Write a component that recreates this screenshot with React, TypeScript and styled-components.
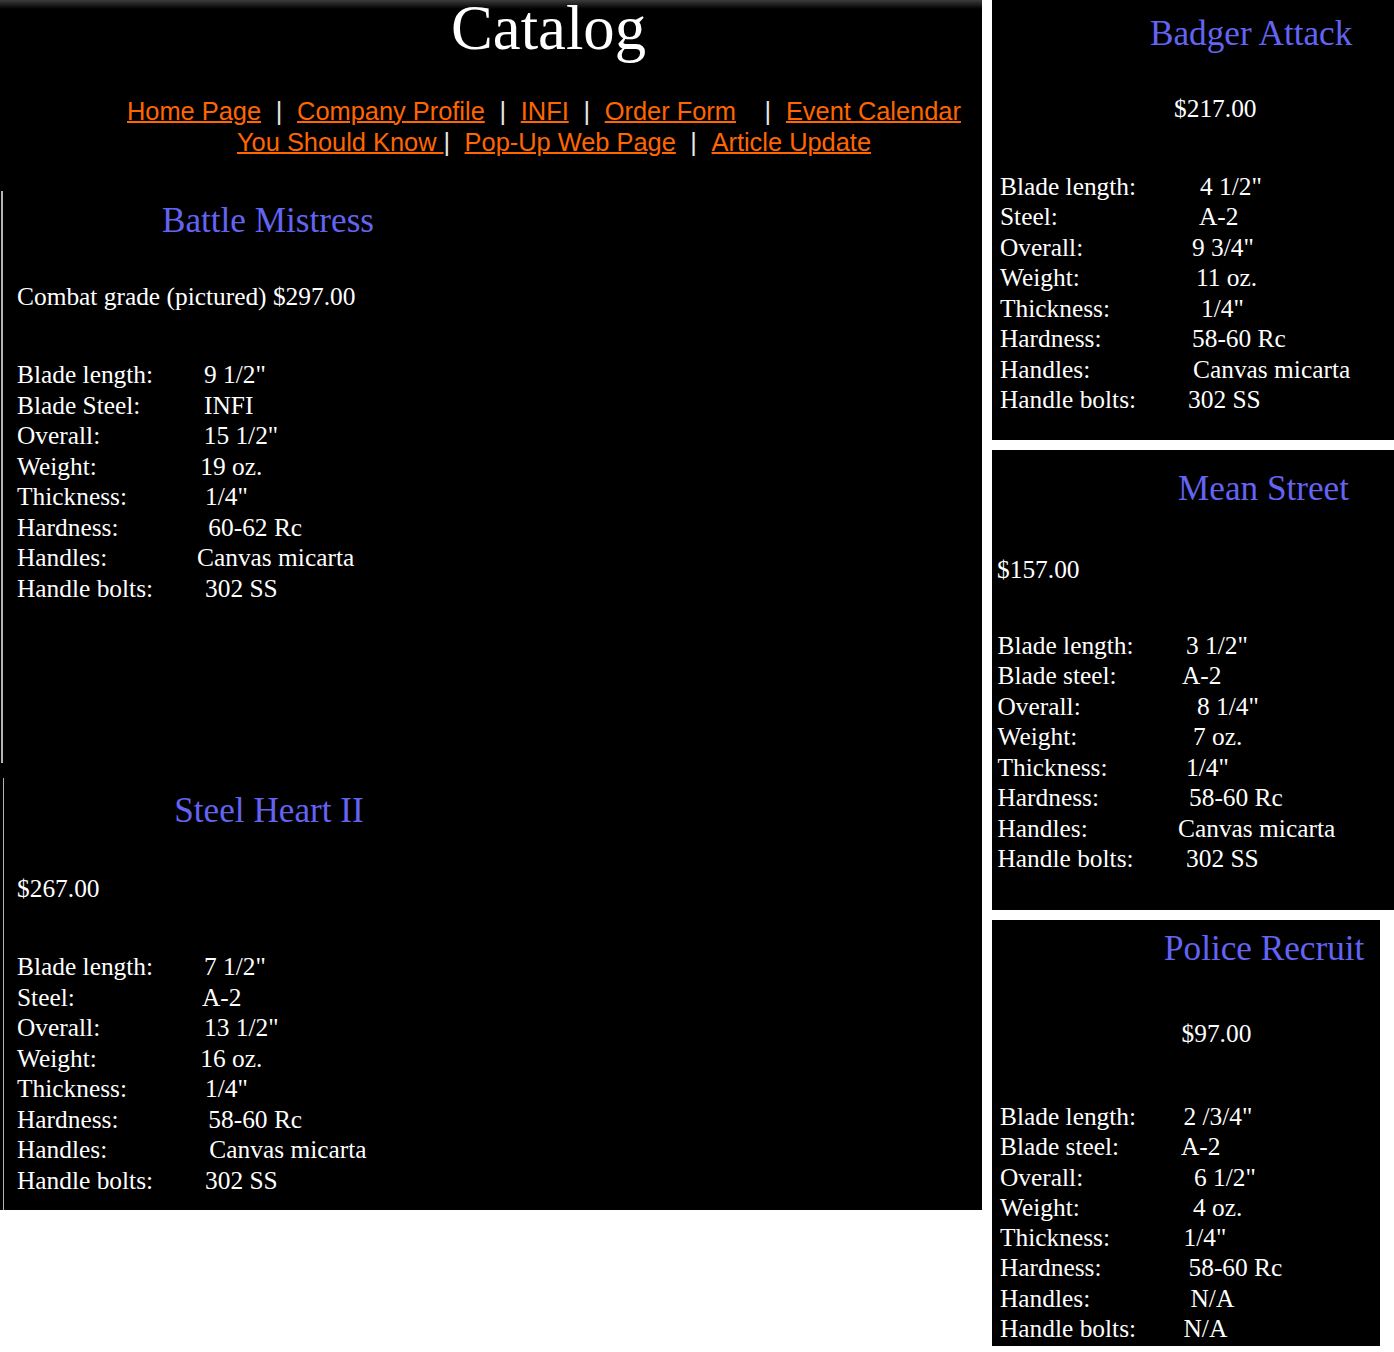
import styled, { createGlobalStyle } from "styled-components";

const GlobalStyle = createGlobalStyle`
  html, body {
    margin: 0;
    padding: 0;
    background: #fff;
  }
  body {
    font-family: "Liberation Serif", "Times New Roman", serif;
    font-size: 25.4px;
    color: #fff;
  }
`;

type Spec = [string, string, number];

type Product = {
  name: string;
  price: string;
  specs: Spec[];
};

const Page = styled.div`
  display: flex;
  align-items: flex-start;
  gap: 10px;
  width: 1394px;
  min-height: 1352px;
`;

const Main = styled.main`
  width: 982px;
  background: linear-gradient(#3c3c3c 0, #000 9px);
`;

const Heading = styled.h1`
  margin: 0;
  padding-left: 115px;
  text-align: center;
  font-size: 62.7px;
  line-height: 56px;
  font-weight: normal;
`;

const Nav = styled.nav`
  margin: 39.7px 0 33.3px;
  font-family: "Liberation Sans", Arial, sans-serif;
  font-size: 25.4px;
  line-height: 31px;
`;

const NavLine = styled.div<{ $indent: number }>`
  padding-left: ${(p) => p.$indent}px;
  white-space: pre;
`;

const NavLink = styled.a`
  color: #ff6600;
  text-decoration: underline;
  text-decoration-thickness: 1.5px;
  cursor: pointer;
`;

const Sep = styled.span<{ $before: number; $after: number }>`
  display: inline-block;
  margin: 0 ${(p) => p.$after}px 0 ${(p) => p.$before}px;
  color: #e8e8e8;
`;

const Section = styled.section<{ $inset: number; $edge: number; $pt: number; $pb: number }>`
  width: 530px;
  margin-left: ${(p) => p.$inset}px;
  border-left: ${(p) => p.$edge}px solid #b4b4b4;
  padding: ${(p) => p.$pt}px 0 ${(p) => p.$pb}px;
`;

const Gap = styled.div`
  height: 15px;
`;

const Side = styled.aside`
  display: flex;
  flex-direction: column;
  gap: 10px;
  width: 402px;
`;

const Card = styled.section<{ $width: number; $pt: number; $pb: number }>`
  width: ${(p) => p.$width}px;
  background: #000;
  padding: ${(p) => p.$pt}px 0 ${(p) => p.$pb}px;
`;

const Title = styled.h2<{ $indent?: number }>`
  margin: 0;
  padding-left: ${(p) => p.$indent ?? 0}px;
  text-align: ${(p) => (p.$indent === undefined ? "center" : "left")};
  font-size: 35.2px;
  line-height: 40px;
  font-weight: normal;
  color: #6464f2;
  white-space: nowrap;
`;

const Price = styled.p<{ $gap: number; $indent: number }>`
  margin: ${(p) => p.$gap}px 0 0;
  padding-left: ${(p) => p.$indent}px;
  line-height: 30.5px;
  white-space: nowrap;
`;

const Specs = styled.div<{ $gap: number; $indent: number }>`
  margin-top: ${(p) => p.$gap}px;
  padding-left: ${(p) => p.$indent}px;
`;

const SpecRow = styled.div<{ $at: number; $step: number }>`
  display: grid;
  grid-template-columns: ${(p) => p.$at}px auto;
  line-height: ${(p) => p.$step}px;
  white-space: nowrap;
`;

const battle: Product = {
  name: "Battle Mistress",
  price: "Combat grade (pictured) $297.00",
  specs: [
    ["Blade length:", '9 1/2"', 187],
    ["Blade Steel:", "INFI", 187],
    ["Overall:", '15 1/2"', 186.7],
    ["Weight:", "19 oz.", 183.3],
    ["Thickness:", '1/4"', 188],
    ["Hardness:", "60-62 Rc", 191.3],
    ["Handles:", "Canvas micarta", 180],
    ["Handle bolts:", "302 SS", 188],
  ],
};

const steelHeart: Product = {
  name: "Steel Heart II",
  price: "$267.00",
  specs: [
    ["Blade length:", '7 1/2"', 187],
    ["Steel:", "A-2", 185],
    ["Overall:", '13 1/2"', 187],
    ["Weight:", "16 oz.", 183.3],
    ["Thickness:", '1/4"', 188],
    ["Hardness:", "58-60 Rc", 191.3],
    ["Handles:", "Canvas micarta", 192.3],
    ["Handle bolts:", "302 SS", 188],
  ],
};

const badger: Product = {
  name: "Badger Attack",
  price: "$217.00",
  specs: [
    ["Blade length:", '4 1/2"', 200],
    ["Steel:", "A-2", 199],
    ["Overall:", '9 3/4"', 192],
    ["Weight:", "11 oz.", 196],
    ["Thickness:", '1/4"', 201],
    ["Hardness:", "58-60 Rc", 192],
    ["Handles:", "Canvas micarta", 193],
    ["Handle bolts:", "302 SS", 188],
  ],
};

const meanStreet: Product = {
  name: "Mean Street",
  price: "$157.00",
  specs: [
    ["Blade length:", '3 1/2"', 188.5],
    ["Blade steel:", "A-2", 184.5],
    ["Overall:", '8 1/4"', 199.5],
    ["Weight:", "7 oz.", 195.5],
    ["Thickness:", '1/4"', 188.5],
    ["Hardness:", "58-60 Rc", 191.5],
    ["Handles:", "Canvas micarta", 180.5],
    ["Handle bolts:", "302 SS", 188.5],
  ],
};

const police: Product = {
  name: "Police Recruit",
  price: "$97.00",
  specs: [
    ["Blade length:", '2 /3/4"', 183.5],
    ["Blade steel:", "A-2", 181],
    ["Overall:", '6 1/2"', 194],
    ["Weight:", "4 oz.", 193],
    ["Thickness:", '1/4"', 183.5],
    ["Hardness:", "58-60 Rc", 188.5],
    ["Handles:", "N/A", 190.5],
    ["Handle bolts:", "N/A", 183.5],
  ],
};

function SpecList({
  specs,
  gap,
  indent,
  step = 30.5,
}: {
  specs: Spec[];
  gap: number;
  indent: number;
  step?: number;
}) {
  return (
    <Specs $gap={gap} $indent={indent}>
      {specs.map(([label, value, at]) => (
        <SpecRow key={label} $at={at} $step={step}>
          <span>{label}</span>
          <span>{value}</span>
        </SpecRow>
      ))}
    </Specs>
  );
}

export default function App() {
  return (
    <>
      <GlobalStyle />
      <Page>
        <Main>
          <Heading>Catalog</Heading>
          <Nav>
            <NavLine $indent={127}>
              <NavLink>Home Page</NavLink>
              <Sep $before={14.7} $after={14.7}>|</Sep>
              <NavLink>Company Profile</NavLink>
              <Sep $before={14.7} $after={14.7}>|</Sep>
              <NavLink>INFI</NavLink>
              <Sep $before={14.7} $after={14.7}>|</Sep>
              <NavLink>Order Form</NavLink>
              <Sep $before={28.7} $after={14.7}>|</Sep>
              <NavLink>Event Calendar</NavLink>
            </NavLine>
            <NavLine $indent={237}>
              <NavLink>You Should Know </NavLink>
              <Sep $before={0} $after={14.4}>|</Sep>
              <NavLink>Pop-Up Web Page</NavLink>
              <Sep $before={14.4} $after={14.7}>|</Sep>
              <NavLink>Article Update</NavLink>
            </NavLine>
          </Nav>

          <Section $inset={1} $edge={2} $pt={10} $pb={159.6}>
            <Title>{battle.name}</Title>
            <Price $gap={40.1} $indent={14}>{battle.price}</Price>
            <SpecList specs={battle.specs} gap={47.8} indent={14} />
          </Section>
          <Gap />
          <Section $inset={3} $edge={1} $pt={12.9} $pb={14.7}>
            <Title>{steelHeart.name}</Title>
            <Price $gap={41.9} $indent={13}>{steelHeart.price}</Price>
            <SpecList specs={steelHeart.specs} gap={48} indent={13} />
          </Section>
        </Main>

        <Side>
          <Card $width={402} $pt={14.2} $pb={25.4}>
            <Title $indent={158}>{badger.name}</Title>
            <Price $gap={38.4} $indent={182}>{badger.price}</Price>
            <SpecList specs={badger.specs} gap={47.5} indent={8} />
          </Card>
          <Card $width={402} $pt={18.9} $pb={36}>
            <Title $indent={186}>{meanStreet.name}</Title>
            <Price $gap={45.5} $indent={5}>{meanStreet.price}</Price>
            <SpecList specs={meanStreet.specs} gap={45.1} indent={5.5} />
          </Card>
          <Card $width={388} $pt={9.2} $pb={2.6}>
            <Title $indent={172}>{police.name}</Title>
            <Price $gap={48.6} $indent={189.5}>{police.price}</Price>
            <SpecList specs={police.specs} gap={52.8} indent={8} step={30.25} />
          </Card>
        </Side>
      </Page>
    </>
  );
}
